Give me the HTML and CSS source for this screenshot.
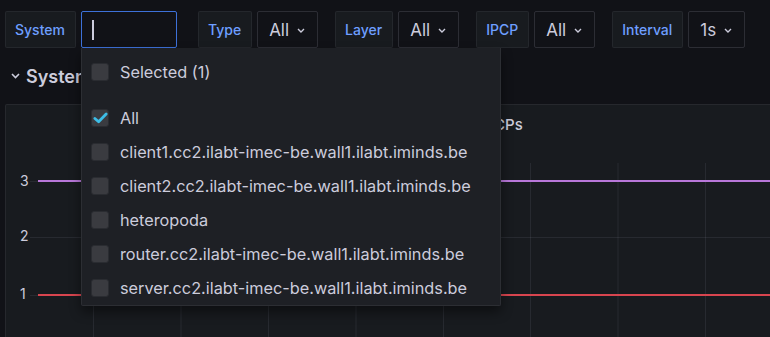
FILE: index.html
```html
<!DOCTYPE html>
<html lang="en">
<head>
    <meta charset="UTF-8">
    <meta name="viewport" content="width=device-width, initial-scale=1.0">
    <title>Dashboard</title>
    <link rel="stylesheet" href="styles.css">
</head>
<body>
    <div class="toolbar">
        <div class="var-group">
            <label class="var-label">System</label>
            <div class="picker">
                <div class="var-input"><span class="caret"></span></div>

                <div class="dropdown">
                    <div class="option">
                        <span class="check"></span>
                        <span>Selected (1)</span>
                    </div>
                    <div class="option-list">
                        <div class="option">
                            <span class="check checked">
                                <svg width="16" height="12" viewBox="0 0 16 12"><path d="M2 6.5 L6 10 L14 1.8" fill="none" stroke="#3dbde6" stroke-width="3" stroke-linecap="round" stroke-linejoin="round"/></svg>
                            </span>
                            <span>All</span>
                        </div>
                        <div class="option"><span class="check"></span><span>client1.cc2.ilabt-imec-be.wall1.ilabt.iminds.be</span></div>
                        <div class="option"><span class="check"></span><span>client2.cc2.ilabt-imec-be.wall1.ilabt.iminds.be</span></div>
                        <div class="option"><span class="check"></span><span>heteropoda</span></div>
                        <div class="option"><span class="check"></span><span>router.cc2.ilabt-imec-be.wall1.ilabt.iminds.be</span></div>
                        <div class="option"><span class="check"></span><span>server.cc2.ilabt-imec-be.wall1.ilabt.iminds.be</span></div>
                    </div>
                </div>
            </div>
        </div>

        <div class="var-group">
            <label class="var-label">Type</label>
            <div class="var-select">All <svg class="chev" width="8" height="5" viewBox="0 0 8 5"><path d="M1 1 L4 4 L7 1" fill="none" stroke="#ccccdc" stroke-width="1.4"/></svg></div>
        </div>
        <div class="var-group">
            <label class="var-label">Layer</label>
            <div class="var-select">All <svg class="chev" width="8" height="5" viewBox="0 0 8 5"><path d="M1 1 L4 4 L7 1" fill="none" stroke="#ccccdc" stroke-width="1.4"/></svg></div>
        </div>
        <div class="var-group">
            <label class="var-label">IPCP</label>
            <div class="var-select">All <svg class="chev" width="8" height="5" viewBox="0 0 8 5"><path d="M1 1 L4 4 L7 1" fill="none" stroke="#ccccdc" stroke-width="1.4"/></svg></div>
        </div>
        <div class="var-group">
            <label class="var-label">Interval</label>
            <div class="var-select">1s <svg class="chev" width="8" height="5" viewBox="0 0 8 5"><path d="M1 1 L4 4 L7 1" fill="none" stroke="#ccccdc" stroke-width="1.4"/></svg></div>
        </div>
    </div>

    <div class="row-title">
        <svg width="9" height="6" viewBox="0 0 9 6"><path d="M1 1 L4.5 4.5 L8 1" fill="none" stroke="#ccccdc" stroke-width="1.6"/></svg>
        <span>System</span>
    </div>

    <div class="panel">
        <div class="panel-title">Number of IPCPs</div>
        <svg class="graph" width="800" height="200" viewBox="0 0 800 200">
            <g stroke="rgba(204,204,220,0.09)" stroke-width="1">
                <line x1="24" y1="36.5" x2="800" y2="36.5"/>
                <line x1="24" y1="92.5" x2="800" y2="92.5"/>
                <line x1="24" y1="150.5" x2="800" y2="150.5"/>
                <line x1="87.5" y1="18" x2="87.5" y2="200"/>
                <line x1="175" y1="18" x2="175" y2="200"/>
                <line x1="262.5" y1="18" x2="262.5" y2="200"/>
                <line x1="350" y1="18" x2="350" y2="200"/>
                <line x1="437.5" y1="18" x2="437.5" y2="200"/>
                <line x1="524.5" y1="18" x2="524.5" y2="200"/>
                <line x1="612" y1="18" x2="612" y2="200"/>
                <line x1="699.5" y1="18" x2="699.5" y2="200"/>
            </g>
            <g class="axis">
                <text x="14" y="41">3</text>
                <text x="14" y="96">2</text>
                <text x="14" y="154">1</text>
            </g>
            <line x1="32" y1="36" x2="800" y2="36" stroke="#b877d9" stroke-width="2"/>
            <line x1="32" y1="150" x2="800" y2="150" stroke="#d8454f" stroke-width="2"/>
        </svg>
    </div>
</body>
</html>
```

FILE: styles.css
```css
body {
    font-family: Inter, "Noto Sans", sans-serif;
    background-color: #111217;
    color: #ccccdc;
    margin: 0;
    overflow: hidden;
    height: 337px;
}

.toolbar {
    display: flex;
    padding: 11px 0 0 5px;
    height: 37px;
}

.var-group {
    display: flex;
    gap: 5px;
    margin-right: 17px;
}

.picker {
    position: relative;
    display: flex;
    margin-right: 4px;
}

.var-label {
    display: flex;
    align-items: center;
    padding: 0 10px 0 9px;
    background: #181b1f;
    border: 1px solid rgba(204, 204, 220, 0.07);
    border-radius: 2px;
    color: #6e9fff;
    font-size: 14px;
    font-weight: 500;
}

.var-input {
    width: 96px;
    border: 1px solid #3d71d9;
    border-radius: 2px;
    background: #111217;
    display: flex;
    align-items: center;
    padding-left: 10px;
    box-sizing: border-box;
}

.caret {
    width: 2px;
    height: 20px;
    background: #ccccdc;
}

.var-select {
    display: flex;
    align-items: center;
    gap: 8px;
    padding: 0 12px 0 11px;
    border: 1px solid rgba(204, 204, 220, 0.15);
    border-radius: 2px;
    font-size: 17px;
}

.chev {
    margin-top: 1px;
}

.dropdown {
    position: absolute;
    left: 0;
    top: 37px;
    width: 420px;
    box-sizing: border-box;
    padding-top: 7px;
    background: #1e2025;
    border: 1px solid #2c2e33;
    border-top: none;
    border-radius: 0 0 2px 2px;
    box-shadow: 0 6px 12px rgba(0, 0, 0, 0.45);
    z-index: 5;
}

.option-list {
    margin-top: 12px;
}

.option {
    display: flex;
    align-items: center;
    gap: 11px;
    height: 34px;
    padding-left: 9px;
    font-size: 16.3px;
}

.check {
    width: 18px;
    height: 18px;
    box-sizing: border-box;
    background: #3a3b40;
    border: 1px solid #2a2c31;
    border-radius: 3px;
    display: flex;
    align-items: center;
    justify-content: center;
}

.check.checked svg {
    margin-left: 1px;
}

.row-title {
    display: flex;
    align-items: center;
    gap: 6px;
    padding-left: 11px;
    margin-top: 15px;
    height: 26px;
    font-size: 18px;
    font-weight: 600;
}

.panel {
    margin: 15px -20px 0 5px;
    background: #181b1f;
    border: 1px solid rgba(204, 204, 220, 0.08);
    border-radius: 2px;
}

.panel-title {
    height: 40px;
    line-height: 40px;
    padding-left: 394px;
    font-size: 15px;
    font-weight: 500;
}

.graph {
    display: block;
}

.axis text {
    fill: #ccccdc;
    font-size: 14px;
    font-family: Inter, "Noto Sans", sans-serif;
}
```
